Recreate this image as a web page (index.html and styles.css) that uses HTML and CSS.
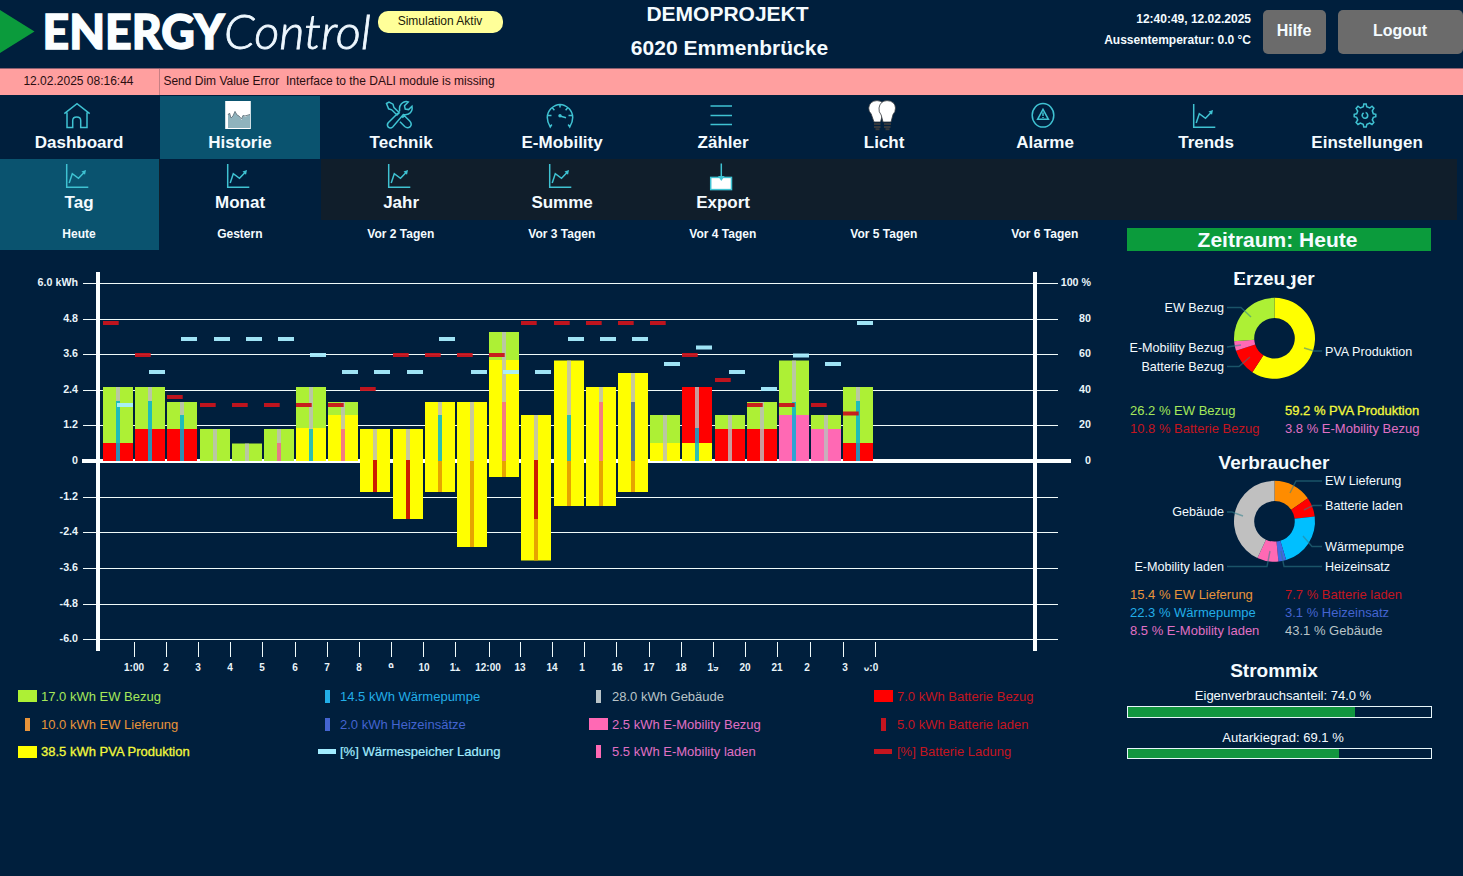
FILE: index.html
```html
<!DOCTYPE html>
<html lang="de">
<head>
<meta charset="utf-8">
<title>ENERGYControl</title>
<link rel="stylesheet" href="styles.css">
</head>
<body>
<svg class="defs" width="0" height="0">
  <symbol id="trend" viewBox="0 0 30 32">
    <path d="M4.7 5V28.3H26.3M7.2 24L10.3 14.7L16.5 19.3L22.5 13"/>
    <path class="solid" d="M19.5 12.5L24 11L23 15.8Z"/>
  </symbol>
</svg>

<header class="top">
  <div class="brand">
    <svg class="logo" width="378" height="68" viewBox="0 0 378 68">
      <polygon points="0,10 34.5,31.5 0,53" fill="#0b9b3c"/>
      <text class="logo-bold" x="42.5" y="49" textLength="182" lengthAdjust="spacingAndGlyphs">ENERGY</text>
      <text class="logo-thin" x="224" y="49" textLength="147" lengthAdjust="spacingAndGlyphs">Control</text>
    </svg>
    <span class="badge">Simulation Aktiv</span>
  </div>
  <div class="project"><div class="name">DEMOPROJEKT</div><div>6020 Emmenbrücke</div></div>
  <div class="status">
    <div class="info"><div>12:40:49, 12.02.2025</div><div>Aussentemperatur: 0.0 °C</div></div>
    <div class="btn help">Hilfe</div>
    <div class="btn logout">Logout</div>
  </div>
</header>

<div class="alarm"><div class="alarm-time">12.02.2025 08:16:44</div><div class="alarm-text">Send Dim Value Error&nbsp; Interface to the DALI module is missing</div></div>

<nav class="nav main-nav">
  <div class="tab">
    <svg class="icon" viewBox="0 0 30 32"><path d="M2.3 14.7L15 4.6L27.7 14.7M5 13.5V28.5H10.7V21.5Q10.7 18 14.7 18Q18.7 18 18.7 21.5V28.5H25V13.5"/></svg>
    <span>Dashboard</span>
  </div>
  <div class="tab active">
    <svg class="icon" viewBox="0 0 30 32"><rect x="2.2" y="2" width="25.6" height="28" fill="#fff" stroke="none"/><path d="M5 16L6.5 14L8 19L10 17L12 12L14 16L16 17L18.5 21L20 16L22 18L27 15.5V29H5Z" fill="#8fb3bd" stroke="none"/><path d="M5 16L6.5 14L8 19L10 17L12 12.5L14 16L16 17L18.5 20L20 16.5L22 17L27 15.5" stroke="#6f7f88" stroke-width="1"/></svg>
    <span>Historie</span>
  </div>
  <div class="tab">
    <svg class="icon" viewBox="0 0 30 32"><path d="M2.5 4.5L5 3L9 5.2L10 8.6L15.3 13.7L13 16L7.7 10.8L4.6 9.8ZM18.3 18.8L20.4 16.7L25.7 22Q28.4 25 26.3 27.6Q23.5 30 20.7 27.5L16 22.7M15.6 12.5Q14.5 6 19.5 3.2Q22 2 24.3 3L20.5 6.8L21.2 10L24.6 10.6L28 7.3Q29 12.5 24.4 15Q21.5 16.2 19.3 15.5L8.7 28Q6.5 30 4.3 28.2Q2.5 26 4.2 23.8L15.6 12.5"/></svg>
    <span>Technik</span>
  </div>
  <div class="tab">
    <svg class="icon" viewBox="0 0 30 32"><path d="M6.8 25.5L5.2 28Q-1 17 6 9.5Q15 1.5 24 9.5Q31 17 24.8 28L23.2 25.5M15 5V8.5M7.5 9L9.4 11.2M22.5 9L20.6 11.2M3 16.6H6.5M27 16.6H23.5M15 17L21 18.8"/><circle class="solid" cx="15" cy="16.7" r="1.7"/></svg>
    <span>E-Mobility</span>
  </div>
  <div class="tab">
    <svg class="icon" viewBox="0 0 30 32"><path d="M4.5 7H26M4.5 16.4H26M4.5 25.6H26"/></svg>
    <span>Zähler</span>
  </div>
  <div class="tab">
    <svg class="icon" viewBox="0 0 30 32"><g stroke="#33383d" stroke-width=".8"><path d="M7 23L4.2 15Q1.5 12.5 1.7 9Q2.5 2 10 1.6Q17 2 18 9Q18 13 15.5 15.5L13.5 23Z" fill="#fff"/><path d="M16 23L14.2 16Q11.5 13 12 9Q13 2 20 1.6Q28 2 28.5 9Q28.5 13 26 15.5L24 23Z" fill="#fff"/></g><path d="M7 25H13.5M7 28H13.5M17 25H24M17 28H23.5M8.5 30.3H12.5M18.5 30.3H22.5" stroke="#35383c" stroke-width="1.9"/></svg>
    <span>Licht</span>
  </div>
  <div class="tab">
    <svg class="icon" viewBox="0 0 30 32"><ellipse cx="15" cy="16.3" rx="10.8" ry="11.8"/><path d="M15 10.3L20.4 20.3H9.6ZM15 13.5V17M15 18.1V19"/></svg>
    <span>Alarme</span>
  </div>
  <div class="tab">
    <svg class="icon"><use href="#trend"/></svg>
    <span>Trends</span>
  </div>
  <div class="tab">
    <svg class="icon" viewBox="0 0 30 32"><path d="M13.3 7.8L13.8 5H16.2L16.7 7.8L19.8 9L22 7.2L23.9 9.2L22.3 11.8L23.3 14.8L25.8 15.3V17.7L23.3 18.4L22.3 21L23.8 23.4L22 25.5L19.7 24L16.9 25.3L16.2 28H13.8L13.2 25.3L10.3 24L8 25.5L6.1 23.5L7.7 21L6.6 18.3L4.2 17.7V15.3L6.7 14.8L7.7 12L6.1 9.4L8 7.2L10.4 9Z"/><path d="M13.6 13.8Q11.5 15.5 12.4 17.5Q13.5 19.6 15.6 19.2Q18 18.6 17.7 16Q17.2 13.8 15.6 13.6"/></svg>
    <span>Einstellungen</span>
  </div>
</nav>

<nav class="nav sub-nav">
  <div class="tab active"><svg class="icon"><use href="#trend"/></svg><span>Tag</span></div>
  <div class="tab open"><svg class="icon"><use href="#trend"/></svg><span>Monat</span></div>
  <div class="tab"><svg class="icon"><use href="#trend"/></svg><span>Jahr</span></div>
  <div class="tab"><svg class="icon"><use href="#trend"/></svg><span>Summe</span></div>
  <div class="tab"><svg class="icon" viewBox="0 0 30 32"><rect x="4.7" y="18.4" width="20.8" height="12.2" fill="#fff"/><path d="M15.3 4.5V18"/><path class="solid" d="M12 17H18.6L15.3 22Z"/></svg><span>Export</span></div>
</nav>

<main class="content">
  <section class="history">
    <div class="days">
      <div class="day active">Heute</div><div class="day">Gestern</div><div class="day">Vor 2 Tagen</div><div class="day">Vor 3 Tagen</div><div class="day">Vor 4 Tagen</div><div class="day">Vor 5 Tagen</div><div class="day">Vor 6 Tagen</div>
    </div>
    <svg id="chart" class="chart" width="1126" height="432" viewBox="0 250 1126 432"></svg>
    <div class="legend">
      <div class="item green"><i class="wide"></i>17.0 kWh EW Bezug</div>
      <div class="item sky near"><i class="slim"></i>14.5 kWh Wärmepumpe</div>
      <div class="item grey"><i class="slim"></i>28.0 kWh Gebäude</div>
      <div class="item red"><i class="wide"></i>7.0 kWh Batterie Bezug</div>
      <div class="item orange"><i class="slim"></i>10.0 kWh EW Lieferung</div>
      <div class="item slate near"><i class="slim"></i>2.0 kWh Heizeinsätze</div>
      <div class="item pink"><i class="wide"></i>2.5 kWh E-Mobility Bezug</div>
      <div class="item red"><i class="slim"></i>5.0 kWh Batterie laden</div>
      <div class="item yellow"><i class="wide"></i>38.5 kWh PVA Produktion</div>
      <div class="item ice near"><i class="dash"></i>[%] Wärmespeicher Ladung</div>
      <div class="item pink"><i class="slim"></i>5.5 kWh E-Mobility laden</div>
      <div class="item red"><i class="dash"></i>[%] Batterie Ladung</div>
    </div>
  </section>

  <aside class="side">
    <div class="period">Zeitraum: Heute</div>
    <h2 class="first">Erzeuger</h2>
    <svg id="producers" class="donut" width="305" height="112" viewBox="1127 290 305 112"></svg>
    <div class="values">
      <div class="green">26.2 % EW Bezug</div><div class="yellow">59.2 % PVA Produktion</div>
      <div class="red">10.8 % Batterie Bezug</div><div class="pink">3.8 % E-Mobility Bezug</div>
    </div>
    <h2 class="second">Verbraucher</h2>
    <svg id="consumers" class="donut" width="305" height="111" viewBox="1127 474 305 111"></svg>
    <div class="values lower">
      <div class="orange">15.4 % EW Lieferung</div><div class="red">7.7 % Batterie laden</div>
      <div class="sky">22.3 % Wärmepumpe</div><div class="slate">3.1 % Heizeinsatz</div>
      <div class="pink">8.5 % E-Mobility laden</div><div class="grey">43.1 % Gebäude</div>
    </div>
    <h2 class="third">Strommix</h2>
    <div class="meter-label">Eigenverbrauchsanteil: 74.0 %</div>
    <div class="meter"><div style="width:74.8%"></div></div>
    <div class="meter-label next">Autarkiegrad: 69.1 %</div>
    <div class="meter short"><div style="width:69.8%"></div></div>
  </aside>
</main>
<script src="script.js"></script>
</body>
</html>
```

FILE: styles.css
```css
* { box-sizing: border-box; }
body {
  margin: 0;
  width: 1463px;
  height: 876px;
  overflow: hidden;
  background: #001f3d;
  color: #f4fbff;
  font-family: "Liberation Sans", Arial, sans-serif;
}
.defs { display: block; }

.top { display: grid; grid-template-columns: 503px 453px 1fr; height: 68px; }
.brand { display: flex; align-items: flex-start; }
.logo { display: block; flex: none; }
.logo-bold { font: 900 48px Lato, "Open Sans", sans-serif; fill: #fbfeff; stroke: #fbfeff; stroke-width: 1.4; }
.logo-thin { font: italic 300 48px Lato, "Open Sans", sans-serif; fill: #eef8ff; stroke: #eef8ff; stroke-width: .8; }
.badge {
  width: 125px; height: 22px; margin-top: 11px; padding-right: 1px;
  border-radius: 10px; background: #ffff99; color: #1a1a0a;
  font-size: 12px; line-height: 20px; text-align: center;
}
.project { font-size: 21px; font-weight: bold; line-height: 34px; text-align: center; margin-top: -3px; }
.project .name { padding-right: 4px; }
.status { display: flex; justify-content: flex-end; align-items: flex-start; }
.info { font-size: 12px; font-weight: bold; line-height: 21px; text-align: right; padding-top: 9px; margin-right: 12px; }
.btn {
  height: 44px; margin-top: 10px; padding-right: 1px; border-radius: 5px; background: #6b6b6b;
  font-size: 16px; font-weight: bold; line-height: 41px; text-align: center;
}
.help { width: 63px; margin-right: 12px; }
.logout { width: 125px; }

.alarm {
  display: flex; height: 27px; background: #ff9f9f; color: #2a0d10;
  border-top: 1px solid #8d6070; font-size: 12px; line-height: 24px;
}
.alarm-time { width: 160px; padding-right: 2px; border-right: 1px solid #c77f83; text-align: center; }
.alarm-text { padding-left: 3.4px; }

.nav { display: grid; grid-template-columns: repeat(9, 161px); margin-left: -1px; }
.main-nav { height: 64px; }
.sub-nav { height: 61px; background: linear-gradient(90deg, #101e2b 1458px, transparent 1458px); }
.tab {
  display: flex; flex-direction: column; align-items: center;
  font-size: 17px; font-weight: bold; line-height: 22px;
}
.tab span { padding: 1px .8px 0 0; }
.main-nav .tab { padding-top: 4px; }
.icon {
  width: 30px; height: 32px; margin-right: 5px; flex: none; display: block;
  fill: none; stroke: #3fc2d2; stroke-width: 1.5;
}
.sub-nav .icon { margin-right: 6px; }
.solid { fill: #3fc2d2; stroke: none; }
.tab.active { background: #0a536f; }
.main-nav .active { margin-top: 1px; padding-top: 3px; margin-right: 1px; }
.main-nav .active span { padding-right: 0; }
.sub-nav .active { margin-right: 1px; padding-left: 1px; }
.tab.open { background: #001f3d; }

.content { display: flex; }
.history { width: 1127px; }
.days { display: grid; grid-template-columns: repeat(7, 161px); margin-left: -1px; }
.day { height: 30px; padding-right: 1.4px; font-size: 12px; font-weight: bold; line-height: 28px; text-align: center; }
.day.active { background: #0a536f; margin-right: 1px; padding-right: 0; }
.chart { display: block; }
.axis { font-size: 10.7px; font-weight: bold; fill: #e9f4fa; text-anchor: end; }
.hour { font-size: 10px; font-weight: bold; fill: #e9f4fa; text-anchor: middle; }

.legend {
  display: grid; grid-template-columns: 300px 271px 285px auto;
  grid-template-rows: 27.6px 28px 27px; padding: .6px 0 0 18px;
}
.item { display: flex; align-items: center; font-size: 13px; }
.item i { flex: none; background: currentColor; }
.wide { width: 19px; height: 12px; margin-right: 4px; }
.slim { width: 5px; height: 13px; margin: 0 11px 0 7px; }
.dash { width: 18px; height: 5px; margin-right: 5px; }
.near .slim { margin-right: 10px; }
.near .dash { margin-right: 4px; }

.green { color: #a5e85a; }
.green i { background: #adf035; }
.sky { color: #22aee8; }
.grey { color: #b9c4c8; }
.red { color: #c4151f; }
.red .wide { background: #ff0000; }
.orange { color: #e8943a; }
.slate { color: #4464d0; }
.pink { color: #e070c4; }
.pink i { background: #ff69b4; }
.yellow { color: #f2f83c; -webkit-text-stroke: .3px #f2f83c; }
.yellow i { background: #ffff00; }
.ice { color: #a2ecff; -webkit-text-stroke: .2px #a2ecff; }

.side { width: 305px; padding-top: 8px; }
.period {
  height: 23px; width: 304px; padding-right: 3px; background: #0b9b3c;
  font-size: 21px; font-weight: bold; line-height: 23px; text-align: center;
}
.side h2 { margin: 15px 0 -1px; padding: 1px 11px 0 0; font-size: 19px; line-height: 24px; text-align: center; }
.side .first { position: relative; }
.first::before, .first::after { content: ""; position: absolute; background: #001f3d; }
.first::before { left: 112px; top: 8px; width: 4px; height: 8px; }
.first::after { left: 158px; top: 6px; width: 6px; height: 13px; }
.side .second { margin-top: 12px; }
.side .third { margin-top: 19px; }
.donut { display: block; }
.donut text { font-size: 12.6px; fill: #f4fbff; }
.values { display: grid; grid-template-columns: 155px 1fr; padding-left: 3px; font-size: 13px; line-height: 18px; white-space: nowrap; }
.values.lower { margin: 1px 0 -1px; }
.meter-label { margin: 4px 0 -1px; padding: 1px 0 0 7px; font-size: 13px; line-height: 18px; text-align: center; }
.meter-label.next { margin-top: 10px; }
.meter { height: 12px; margin-top: 2px; border: 1px solid #e8f6fa; }
.meter.short { height: 11px; }
.meter div { height: 100%; background: #12963f; }
```

FILE: script.js
```js
const NS = 'http://www.w3.org/2000/svg';
const BG = '#001f3d';
const C = { g: '#adf035', r: '#ff0000', y: '#ffff00', p: '#ff69b4', e: '#f2609c',
  b: '#00b0d8', w: '#bdbdbd', o: '#e09000', s: '#3058b0', d: '#cc1c00' };

function add(svg, tag, attrs, text) {
  const el = document.createElementNS(NS, tag);
  for (const k in attrs) el.setAttribute(k, attrs[k]);
  if (text !== undefined) el.textContent = text;
  svg.appendChild(el);
  return el;
}
function rect(svg, x, y, w, h, fill, opacity) {
  add(svg, 'rect', { x, y, width: w, height: h, fill, opacity: opacity || 1 });
}

const chart = document.getElementById('chart');
const left = ['6.0 kWh', '4.8', '3.6', '2.4', '1.2', '0', '-1.2', '-2.4', '-3.6', '-4.8', '-6.0'];
const right = ['100 %', '80', '60', '40', '20', '0'];
const grid = [283, 319, 354, 390, 425, 461, 497, 532, 568, 604, 639];
grid.forEach((y, i) => {
  if (i !== 5) rect(chart, 83, y, 975, 1, '#f0fafa');
  add(chart, 'text', { x: 78, y: y + 3, class: 'axis' }, left[i]);
  if (i < 6) add(chart, 'text', { x: 1091, y: y + 3, class: 'axis' }, right[i]);
});
rect(chart, 82, 459, 989, 4, '#fbffff');
rect(chart, 96, 272, 4, 379, '#fbffff');
rect(chart, 1033, 272, 4, 379, '#fbffff');

// [x, outer segments, inner segments, battery level y, heat storage y]
// segment lists: start y, then colour key and end y for each stacked part
const bars = [
  [103, [387, 'g', 443, 'r', 461], [387, 'w', 401, 'b', 461], 321, 403],
  [135, [387, 'g', 429, 'r', 461], [387, 'w', 401, 'b', 461], 353, 370],
  [167, [402, 'g', 429, 'r', 461], [402, 'w', 415, 'b', 461], 395, 337],
  [200, [429, 'g', 461], [429, 'w', 461], 403, 337],
  [232, [443.5, 'g', 461], [443.5, 'w', 461], 403, 337],
  [264, [429, 'g', 461], [429, 'w', 443, 'e', 461], 403, 337],
  [296, [387, 'g', 428, 'y', 461], [387, 'w', 429, 'b', 461], 403, 353],
  [328, [402, 'g', 415, 'y', 461], [402, 'w', 429, 'e', 461], 403, 370],
  [360, [429, 'y', 492], [429, 'w', 460, 'd', 492], 387, 370],
  [393, [429, 'y', 519], [429, 'w', 460, 'd', 519], 353, 370],
  [425, [402, 'y', 492], [402, 'w', 415, 'b', 461, 'o', 492], 353, 337],
  [457, [402, 'y', 547], [402, 'w', 461, 'o', 547], 353, 370],
  [489, [332, 'g', 360, 'y', 477], [332, 'w', 402, 'e', 461, 'o', 477], 353, 370],
  [521, [415, 'y', 560.5], [415, 'w', 460, 'd', 519, 'o', 560.5], 321, 370],
  [554, [360.5, 'y', 506], [360.5, 'w', 415, 'b', 461, 'o', 506], 321, 337],
  [586, [387, 'y', 506], [387, 'w', 402, 'e', 461, 'o', 506], 321, 337],
  [618, [373, 'y', 492], [373, 'w', 402, 's', 461, 'o', 492], 321, 337],
  [650, [415, 'g', 443, 'y', 461], [415, 'w', 461], 321, 362],
  [682, [387, 'r', 443, 'y', 461], [387, 'w', 428, 'b', 461], 353, 345.5],
  [715, [415, 'g', 429, 'r', 461], [415, 'w', 461], 378, 370],
  [747, [402, 'g', 429, 'r', 461], [402, 'w', 461], 403, 387],
  [779, [360.5, 'g', 415, 'p', 461], [360.5, 'w', 402, 'b', 461], 403, 353.5],
  [811, [415, 'g', 429, 'p', 461], [415, 'w', 461], 403, 362],
  [843, [387, 'g', 443, 'r', 461], [387, 'w', 401, 'b', 461], 411.5, 321]
];
function stack(x, w, seg, opacity) {
  let y = seg[0];
  for (let i = 1; i < seg.length; i += 2) {
    const key = seg[i];
    rect(chart, x, y, w, seg[i + 1] - y, C[key], key === 'd' ? 1 : opacity);
    y = seg[i + 1];
  }
}
bars.forEach(([x, outer, inner]) => {
  stack(x, 30, outer, 1);
  stack(x + 13, 4, inner, 0.82);
});
bars.forEach(([x, , , bat, heat]) => {
  rect(chart, x, bat, 15.7, 4, '#c8141c', 0.95);
  rect(chart, x + 14, heat, 16, 4, '#a8eeff', 0.95);
});

// hour ticks: [tick x, label, label offset]
const hours = [
  [134, '1:00', 0], [166, '2', 0], [198, '3', 0], [230, '4', 0], [262, '5', 0], [295, '6', 0],
  [327, '7', 0], [359, '8', 0], [391, '9', 0], [423, '10', 1], [455, '11', 0], [489, '12:00', -1],
  [520, '13', 0], [552, '14', 0], [584, '1', -2], [616, '16', 1], [649, '17', 0], [681, '18', 0],
  [713, '19', 0], [745, '20', 0], [777, '21', 0], [810, '2', -3], [843, '3', 2], [875, '0:0', -4]
];
hours.forEach(([x, label, dx]) => {
  rect(chart, x, 642, 1, 15, '#f0fafa');
  add(chart, 'text', { x: x + dx, y: 671, class: 'hour' }, label);
});
// worn digits
rect(chart, 387, 668, 8, 4, BG);
rect(chart, 456, 663, 6, 4.5, BG);
rect(chart, 713.5, 663, 7, 4, BG);
rect(chart, 863, 663, 6.5, 4.5, BG);

function donut(id, cx, cy, parts, leaders, labels) {
  const svg = document.getElementById(id);
  const R = 40.5, r = 20.3;
  const total = parts.reduce((s, p) => s + p[0], 0);
  const pt = (a, rad) => (cx + rad * Math.sin(a)).toFixed(2) + ' ' + (cy - rad * Math.cos(a)).toFixed(2);
  let a = 0;
  parts.forEach(([v, fill]) => {
    const b = a + v / total * 2 * Math.PI;
    const big = b - a > Math.PI ? 1 : 0;
    add(svg, 'path', { fill, d: `M${pt(a, R)}A${R} ${R} 0 ${big} 1 ${pt(b, R)}L${pt(b, r)}A${r} ${r} 0 ${big} 0 ${pt(a, r)}Z` });
    a = b;
  });
  leaders.forEach(d => add(svg, 'path', { d, fill: 'none', stroke: '#2f7f8c', 'stroke-width': 1.4, opacity: 0.55 }));
  labels.forEach(([x, y, t, anchor]) => add(svg, 'text', { x, y, 'text-anchor': anchor || 'start' }, t));
}
donut('producers', 1274.5, 338.3,
  [[59.2, '#ffff00'], [10.8, '#ff0000'], [3.8, '#ff69b4'], [26.2, '#adf035']],
  ['M1227 307.5H1241L1251 317', 'M1227 347L1241 345', 'M1227 366.5H1239L1250 357', 'M1304 348L1314 351H1322'],
  [[1224, 312, 'EW Bezug', 'end'], [1224, 352, 'E-Mobility Bezug', 'end'], [1224, 371, 'Batterie Bezug', 'end'], [1325, 356, 'PVA Produktion']]);
donut('consumers', 1274.5, 521.3,
  [[15.4, '#ff8c00'], [7.7, '#ff0000'], [22.3, '#00bfff'], [3.1, '#4169e1'], [8.5, '#ff69b4'], [43.1, '#c0c0c0']],
  ['M1290 493L1296 481H1322', 'M1304 510L1313 505.5H1322', 'M1303 536L1312 546.5H1322', 'M1281 551L1284 566.5H1322', 'M1270 551L1267 566.5H1227', 'M1227 512H1232L1243 516'],
  [[1325, 485, 'EW Lieferung'], [1325, 510, 'Batterie laden'], [1325, 551, 'Wärmepumpe'], [1325, 571, 'Heizeinsatz'], [1224, 571, 'E-Mobility laden', 'end'], [1224, 516, 'Gebäude', 'end']]);
```
